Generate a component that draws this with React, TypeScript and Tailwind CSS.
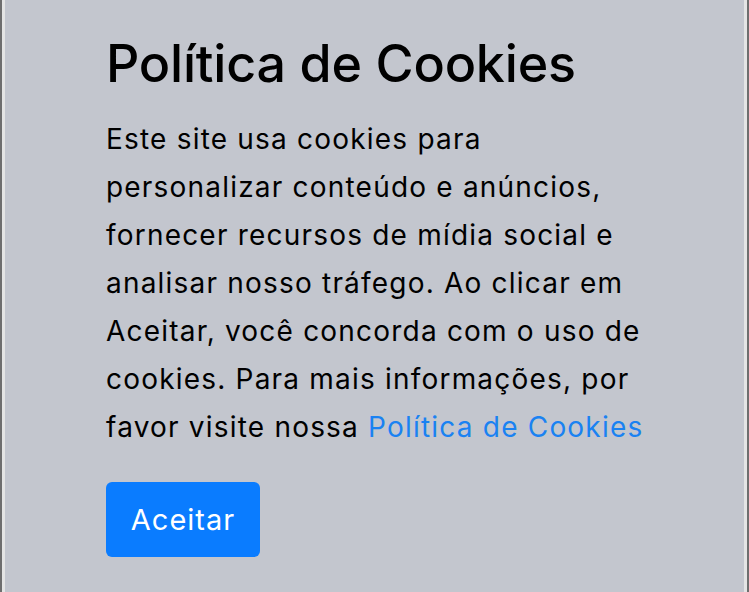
export default function App() {
  return (
    <div className="h-[592px] w-[749px] overflow-hidden bg-[#6e6e6e] px-[2px]">
      <div className="h-full border-x-[3px] border-[#e4e4e4] bg-[#c3c6ce] font-['Inter',_sans-serif] text-black">
        <div className="ml-[101px] w-[545px] pt-[34px]">
          <h1 className="text-[52px] leading-[60px] font-medium tracking-[-0.2px]">Política de Cookies</h1>
          <p className="mt-[21px] text-[28px] leading-[48px] tracking-[1.2px]">
            Este site usa cookies para personalizar conteúdo e anúncios, fornecer recursos de mídia social e
            analisar nosso tráfego. Ao clicar em Aceitar, você concorda com o uso de cookies. Para mais
            informações, por favor visite nossa <a href="#" className="text-[#1a82f2]">Política de Cookies</a>
          </p>
          <button className="mt-[31px] h-[75px] w-[154px] rounded-[6px] bg-[#0a7cff] text-[29px] tracking-[1px] text-white">
            Aceitar
          </button>
        </div>
      </div>
    </div>
  );
}
